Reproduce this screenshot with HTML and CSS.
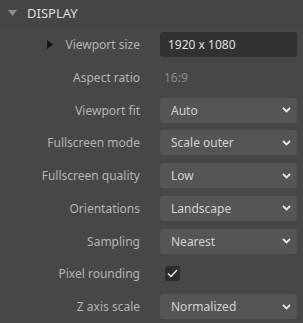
FILE: index.html
```html
<!DOCTYPE html>
<html lang="en">
<head>
    <meta charset="UTF-8">
    <title>Display</title>
    <link rel="stylesheet" href="styles.css">
</head>
<body>
    <div class="panel">
        <div class="header">
            <svg class="caret" width="9" height="6" viewBox="0 0 9 6"><path d="M0 0H9L4.5 6Z" fill="#8c8c8c"/></svg>
            <span>DISPLAY</span>
        </div>
        <div class="props">
            <div class="label"><svg class="expand" width="6" height="9" viewBox="0 0 6 9"><path d="M0 0L6 4.5L0 9Z" fill="#151515"/></svg>Viewport size</div>
            <div class="field"><div class="input">1920 x 1080</div></div>

            <div class="label">Aspect ratio</div>
            <div class="field"><span class="dim">16:9</span></div>

            <div class="label">Viewport fit</div>
            <div class="field"><div class="select">Auto<svg class="chev" width="9" height="6" viewBox="0 0 9 6"><path d="M1 1L4.5 4.5L8 1" fill="none" stroke="#e6e6e6" stroke-width="1.8"/></svg></div></div>

            <div class="label">Fullscreen mode</div>
            <div class="field"><div class="select">Scale outer<svg class="chev" width="9" height="6" viewBox="0 0 9 6"><path d="M1 1L4.5 4.5L8 1" fill="none" stroke="#e6e6e6" stroke-width="1.8"/></svg></div></div>

            <div class="label">Fullscreen quality</div>
            <div class="field"><div class="select">Low<svg class="chev" width="9" height="6" viewBox="0 0 9 6"><path d="M1 1L4.5 4.5L8 1" fill="none" stroke="#e6e6e6" stroke-width="1.8"/></svg></div></div>

            <div class="label">Orientations</div>
            <div class="field"><div class="select">Landscape<svg class="chev" width="9" height="6" viewBox="0 0 9 6"><path d="M1 1L4.5 4.5L8 1" fill="none" stroke="#e6e6e6" stroke-width="1.8"/></svg></div></div>

            <div class="label">Sampling</div>
            <div class="field"><div class="select">Nearest<svg class="chev" width="9" height="6" viewBox="0 0 9 6"><path d="M1 1L4.5 4.5L8 1" fill="none" stroke="#e6e6e6" stroke-width="1.8"/></svg></div></div>

            <div class="label">Pixel rounding</div>
            <div class="field">
                <div class="check"><svg width="11" height="9" viewBox="0 0 11 9"><path d="M1 4.5L4 7.5L10 1" fill="none" stroke="#f0f0f0" stroke-width="1.4"/></svg></div>
            </div>

            <div class="label">Z axis scale</div>
            <div class="field"><div class="select">Normalized<svg class="chev" width="9" height="6" viewBox="0 0 9 6"><path d="M1 1L4.5 4.5L8 1" fill="none" stroke="#e6e6e6" stroke-width="1.8"/></svg></div></div>
        </div>
    </div>
</body>
</html>
```

FILE: styles.css
```css
body {
    margin: 0;
    padding: 0;
    background: #474747;
    font-family: 'Noto Sans', 'Open Sans', sans-serif;
    font-size: 12px;
}

.panel {
    width: 303px;
    height: 323px;
    background: #474747;
}

.header {
    height: 26px;
    display: flex;
    align-items: center;
    padding-left: 8px;
    color: #dcdcdc;
    font-size: 13px;
    background: #454545;
}

.header .caret {
    margin-right: 10px;
}

.props {
    display: grid;
    grid-template-columns: 140px 137px;
    column-gap: 20px;
    row-gap: 7.75px;
    grid-auto-rows: 25px;
    padding-top: 6px;
}

.label {
    display: flex;
    align-items: center;
    justify-content: flex-end;
    color: #b4b4b4;
}

.label .expand {
    margin-right: 12px;
}

.field {
    display: flex;
    align-items: center;
}

.input {
    width: 100%;
    height: 25px;
    box-sizing: border-box;
    background: #313131;
    border-radius: 3px;
    color: #e0e0e0;
    display: flex;
    align-items: center;
    padding-left: 8px;
}

.dim {
    color: #8a8a8a;
    padding-left: 4px;
}

.select {
    width: 100%;
    height: 25px;
    box-sizing: border-box;
    background: #555555;
    border-radius: 3px;
    color: #d2d2d2;
    display: flex;
    align-items: center;
    justify-content: space-between;
    padding: 0 6px 0 11px;
}

.check {
    width: 15px;
    height: 15px;
    margin-left: 5px;
    background: #2c2c2c;
    border-radius: 3px;
    display: flex;
    align-items: center;
    justify-content: center;
}
```
